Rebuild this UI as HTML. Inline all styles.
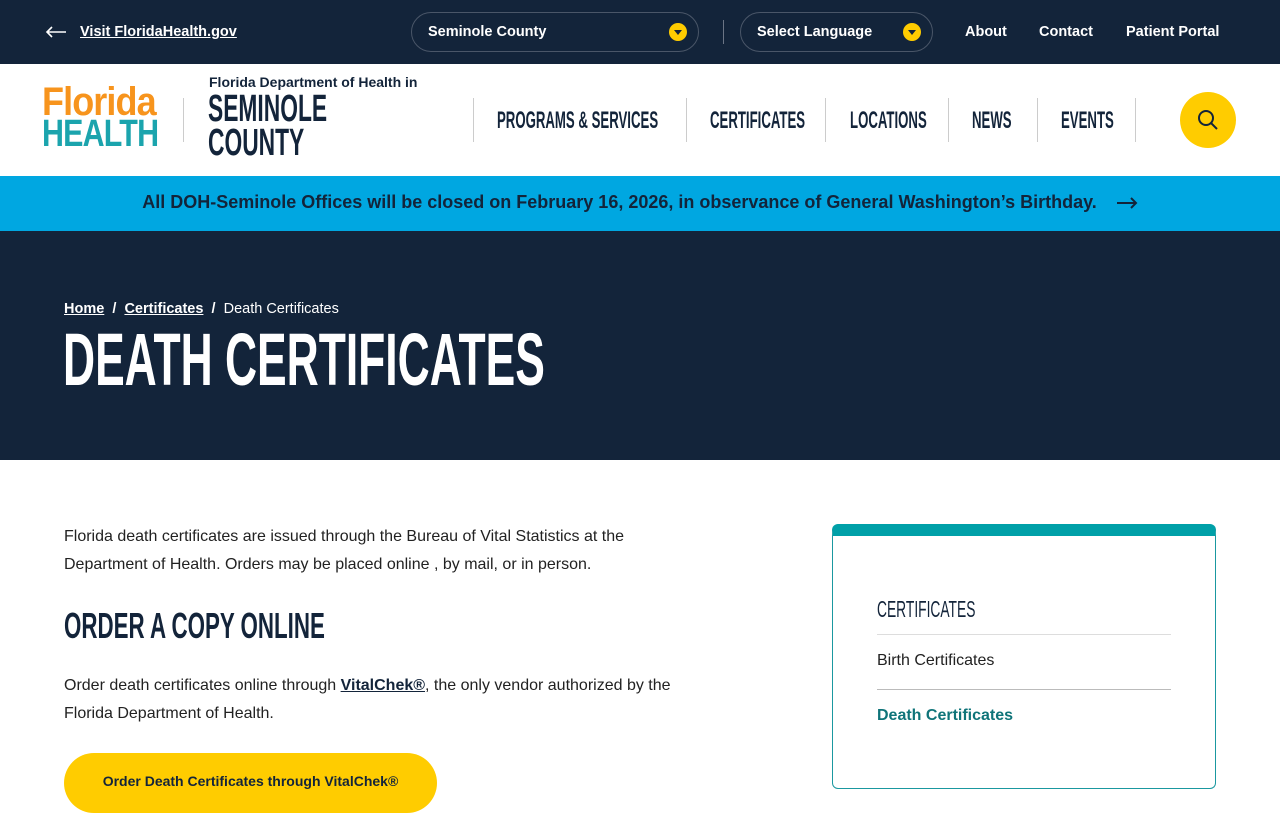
<!DOCTYPE html>
<html><head><meta charset="utf-8">
<style>
*{margin:0;padding:0;box-sizing:border-box}
body{width:1280px;height:800px;overflow:hidden;font-family:"Liberation Sans",sans-serif;background:#fff;color:#13243a}
.cond{font-family:"Liberation Sans",sans-serif;font-weight:bold;display:inline-block;transform-origin:left center;white-space:nowrap}
.top{position:absolute;left:0;top:0;width:1280px;height:64px;background:#13243a;color:#fff;font-weight:bold;font-size:14.5px}
.top a{color:#fff;position:absolute}
.pill{position:absolute;top:12px;height:40px;border:1px solid #4a5668;border-radius:20px}
.pill span{position:absolute;left:16px;top:11px;font-size:14.5px}
.dot{position:absolute;top:10px;width:18px;height:18px;border-radius:50%;background:#ffcc00}
.dot:after{content:"";position:absolute;left:5px;top:7px;border-left:4px solid transparent;border-right:4px solid transparent;border-top:5px solid #13243a}
.hdr{position:absolute;top:64px;left:0;width:1280px;height:112px;background:#fff}
.nav{position:absolute;top:34px;height:44px;border-left:1px solid #ccc;color:#13243a;font-size:24px;line-height:46px;white-space:nowrap}
.alert{position:absolute;top:176px;left:0;width:1280px;height:55px;background:#00a7e1;color:#13243a;font-weight:bold;font-size:18px;text-align:center;line-height:53px}
.hero{position:absolute;top:231px;left:0;width:1280px;height:229px;background:#13243a;color:#fff}
p.body{font-size:16px;line-height:28px;color:#222}
</style></head><body>
<div class="top">
  <svg style="position:absolute;left:45px;top:26px" width="22" height="12" viewBox="0 0 22 12"><path d="M21 6H2M7 1L2 6l5 5" stroke="#fff" stroke-width="1.6" fill="none"/></svg>
  <a style="left:80px;top:24px;text-decoration:underline">Visit FloridaHealth.gov</a>
  <div class="pill" style="left:411px;width:288px"><span>Seminole County</span><div class="dot" style="left:257px"></div></div>
  <div style="position:absolute;left:723px;top:20px;width:1px;height:24px;background:#6b7585"></div>
  <div class="pill" style="left:740px;width:193px"><span>Select Language</span><div class="dot" style="left:162px"></div></div>
  <a style="left:965px;top:24px">About</a>
  <a style="left:1039px;top:24px">Contact</a>
  <a style="left:1126px;top:24px">Patient Portal</a>
</div>
<div class="hdr">
  <div style="position:absolute;left:42px;top:22px;font-weight:bold;line-height:32px;letter-spacing:-1px">
    <div style="color:#f7941d;font-size:40px"><span class="cond" style="transform:scaleX(.9)">Florida</span></div>
    <div style="color:#1ba4ad;font-size:38px"><span class="cond" style="transform:scaleX(.8)">HEALTH</span></div>
  </div>
  <div style="position:absolute;left:183px;top:34px;width:1px;height:44px;background:#ccc"></div>
  <div style="position:absolute;left:209px;top:10px;font-size:14px;font-weight:bold">Florida Department of Health in</div>
  <div style="position:absolute;left:208px;top:28px;font-size:38px;line-height:34px"><span class="cond" style="transform:scaleX(0.6)">SEMINOLE<br>COUNTY</span></div>
  <div class="nav" style="left:473px;width:213px"><span class="cond" style="margin-left:23px;transform:scaleX(.55)">PROGRAMS &amp; SERVICES</span></div>
  <div class="nav" style="left:686px;width:139px"><span class="cond" style="margin-left:23px;transform:scaleX(.55)">CERTIFICATES</span></div>
  <div class="nav" style="left:825px;width:123px"><span class="cond" style="margin-left:24px;transform:scaleX(.55)">LOCATIONS</span></div>
  <div class="nav" style="left:948px;width:89px"><span class="cond" style="margin-left:23px;transform:scaleX(.55)">NEWS</span></div>
  <div class="nav" style="left:1037px;width:99px;border-right:1px solid #ccc"><span class="cond" style="margin-left:23px;transform:scaleX(.55)">EVENTS</span></div>
  <div style="position:absolute;left:1180px;top:28px;width:56px;height:56px;border-radius:50%;background:#ffcc00">
    <svg style="position:absolute;left:17px;top:17px" width="22" height="22" viewBox="0 0 22 22"><circle cx="9" cy="9" r="7" stroke="#13243a" stroke-width="2" fill="none"/><path d="M14 14l6 6" stroke="#13243a" stroke-width="2"/></svg>
  </div>
</div>
<div class="alert">All DOH-Seminole Offices will be closed on February 16, 2026, in observance of General Washington’s Birthday.
  <svg style="vertical-align:middle;margin-left:14px" width="22" height="12" viewBox="0 0 22 12"><path d="M1 6h19M15 1l5 5-5 5" stroke="#13243a" stroke-width="2" fill="none"/></svg></div>
<div class="hero">
  <div style="position:absolute;left:64px;top:70px;font-size:14.5px;font-weight:bold"><u>Home</u> &nbsp;/&nbsp; <u>Certificates</u> &nbsp;/&nbsp; <span style="font-weight:normal">Death Certificates</span></div>
  <div style="position:absolute;left:63px;top:89px;font-size:74px;line-height:80px"><span class="cond" style="transform:scaleX(.6)">DEATH CERTIFICATES</span></div>
</div>
<p class="body" style="position:absolute;left:64px;top:523px;width:640px">Florida death certificates are issued through the Bureau of Vital Statistics at the Department of Health. Orders may be placed online , by mail, or in person.</p>
<div style="position:absolute;left:64px;top:606px;font-size:36px;line-height:40px"><span class="cond" style="transform:scaleX(.62)">ORDER A COPY ONLINE</span></div>
<p class="body" style="position:absolute;left:64px;top:672px;width:640px">Order death certificates online through <b style="text-decoration:underline;color:#13243a">VitalChek®</b>, the only vendor authorized by the Florida Department of Health.</p>
<div style="position:absolute;left:64px;top:753px;width:373px;height:60px;border-radius:30px;background:#ffcc00;font-weight:bold;font-size:14px;line-height:56px;text-align:center">Order Death Certificates through VitalChek®</div>
<div style="position:absolute;left:832px;top:524px;width:384px;height:265px;border:1px solid #1a98a0;border-top:12px solid #00a0a8;border-radius:6px">
  <div style="position:absolute;left:44px;top:60px;font-size:23px"><span class="cond" style="font-weight:normal;transform:scaleX(.6)">CERTIFICATES</span></div>
  <div style="position:absolute;left:44px;top:98px;width:294px;height:1px;background:#ddd"></div>
  <div style="position:absolute;left:44px;top:116px;font-size:16px;color:#222">Birth Certificates</div>
  <div style="position:absolute;left:44px;top:153px;width:294px;height:1px;background:#bbb"></div>
  <div style="position:absolute;left:44px;top:171px;font-size:16px;font-weight:bold;color:#0f7479">Death Certificates</div>
</div>
</body></html>
